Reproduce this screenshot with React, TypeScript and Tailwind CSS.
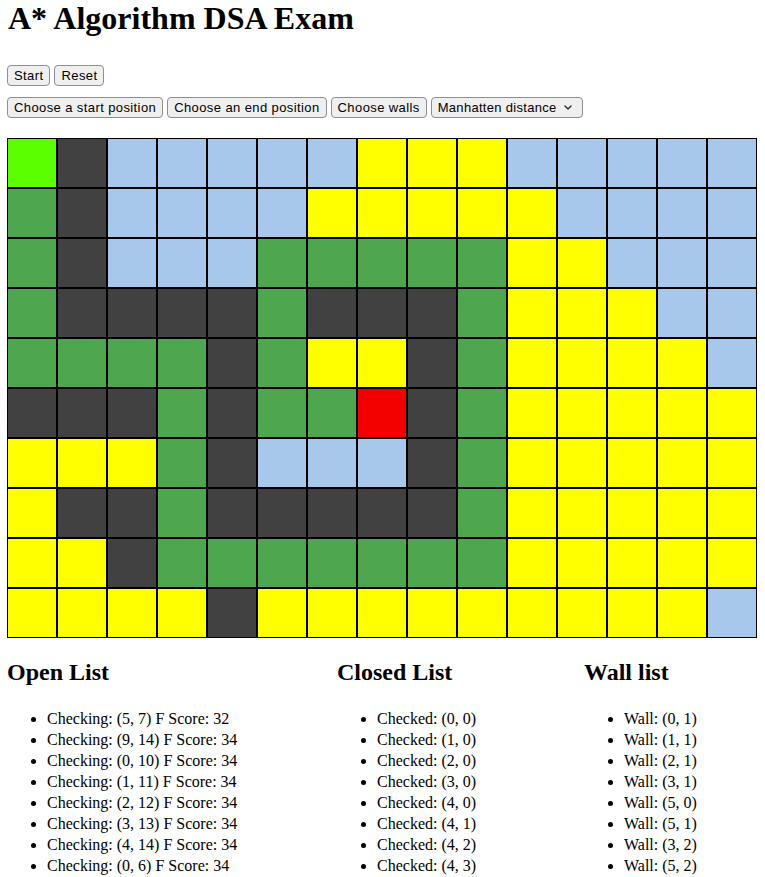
const L = "bg-[#5cff00]";
const W = "bg-[#414141]";
const B = "bg-[#a7c8eb]";
const Y = "bg-[#ffff00]";
const G = "bg-[#4ea64f]";
const R = "bg-[#f20000]";

const grid: string[][] = [
    [L, W, B, B, B, B, B, Y, Y, Y, B, B, B, B, B],
    [G, W, B, B, B, B, Y, Y, Y, Y, Y, B, B, B, B],
    [G, W, B, B, B, G, G, G, G, G, Y, Y, B, B, B],
    [G, W, W, W, W, G, W, W, W, G, Y, Y, Y, B, B],
    [G, G, G, G, W, G, Y, Y, W, G, Y, Y, Y, Y, B],
    [W, W, W, G, W, G, G, R, W, G, Y, Y, Y, Y, Y],
    [Y, Y, Y, G, W, B, B, B, W, G, Y, Y, Y, Y, Y],
    [Y, W, W, G, W, W, W, W, W, G, Y, Y, Y, Y, Y],
    [Y, Y, W, G, G, G, G, G, G, G, Y, Y, Y, Y, Y],
    [Y, Y, Y, Y, W, Y, Y, Y, Y, Y, Y, Y, Y, Y, B],
];

const openList = [
    "Checking: (5, 7) F Score: 32",
    "Checking: (9, 14) F Score: 34",
    "Checking: (0, 10) F Score: 34",
    "Checking: (1, 11) F Score: 34",
    "Checking: (2, 12) F Score: 34",
    "Checking: (3, 13) F Score: 34",
    "Checking: (4, 14) F Score: 34",
    "Checking: (0, 6) F Score: 34",
];

const closedList = ["(0, 0)", "(1, 0)", "(2, 0)", "(3, 0)", "(4, 0)", "(4, 1)", "(4, 2)", "(4, 3)"].map(
    (p) => `Checked: ${p}`
);

const wallList = ["(0, 1)", "(1, 1)", "(2, 1)", "(3, 1)", "(5, 0)", "(5, 1)", "(3, 2)", "(5, 2)"].map(
    (p) => `Wall: ${p}`
);

const Btn = ({ children }: { children: React.ReactNode }) => (
    <button className="h-[21px] px-[6px] bg-[#efeff0] border border-[#8e8e93] rounded-[4px] text-[13px] tracking-[0.4px] leading-none text-black font-['Liberation_Sans',Arial,sans-serif]">
        {children}
    </button>
);

const List = ({ title, items, width }: { title: string; items: string[]; width: string }) => (
    <div className={width}>
        <h2 className="text-[24px] leading-[28px] font-bold">{title}</h2>
        <ul className="mt-[22px] pl-[40px] list-disc text-[16px] leading-[21px]">
            {items.map((t) => (
                <li key={t}>{t}</li>
            ))}
        </ul>
    </div>
);

export default function App() {
    return (
        <main className="px-[7px] font-['Liberation_Serif','Times_New_Roman',serif] text-black bg-white min-h-screen">
            <h1 className="text-[32px] leading-[37px] font-bold pl-px">A* Algorithm DSA Exam</h1>

            <div className="mt-[28px] flex gap-[4px]">
                <Btn>Start</Btn>
                <Btn>Reset</Btn>
            </div>

            <div className="mt-[11px] flex gap-[4px]">
                <Btn>Choose a start position</Btn>
                <Btn>Choose an end position</Btn>
                <Btn>Choose walls</Btn>
                <button className="h-[21px] w-[152px] pl-[6px] pr-[10px] flex items-center justify-between bg-[#efeff0] border border-[#8e8e93] rounded-[4px] text-[13px] tracking-[0.3px] leading-none text-black font-['Liberation_Sans',Arial,sans-serif]">
                    <span>Manhatten distance</span>
                    <svg width="8" height="5" viewBox="0 0 8 5" fill="none" stroke="#222" strokeWidth="1.3" strokeLinecap="round" strokeLinejoin="round">
                        <path d="M1 1 L4 4 L7 1" />
                    </svg>
                </button>
            </div>

            <div className="mt-[20px] grid grid-cols-[repeat(15,50px)] w-[750px]">
                {grid.flat().map((c, i) => (
                    <div key={i} className={`h-[50px] w-[50px] border border-black ${c}`} />
                ))}
            </div>

            <div className="mt-[20px] flex">
                <List title="Open List" items={openList} width="w-[330px]" />
                <List title="Closed List" items={closedList} width="w-[247px]" />
                <List title="Wall list" items={wallList} width="flex-1" />
            </div>
        </main>
    );
}
